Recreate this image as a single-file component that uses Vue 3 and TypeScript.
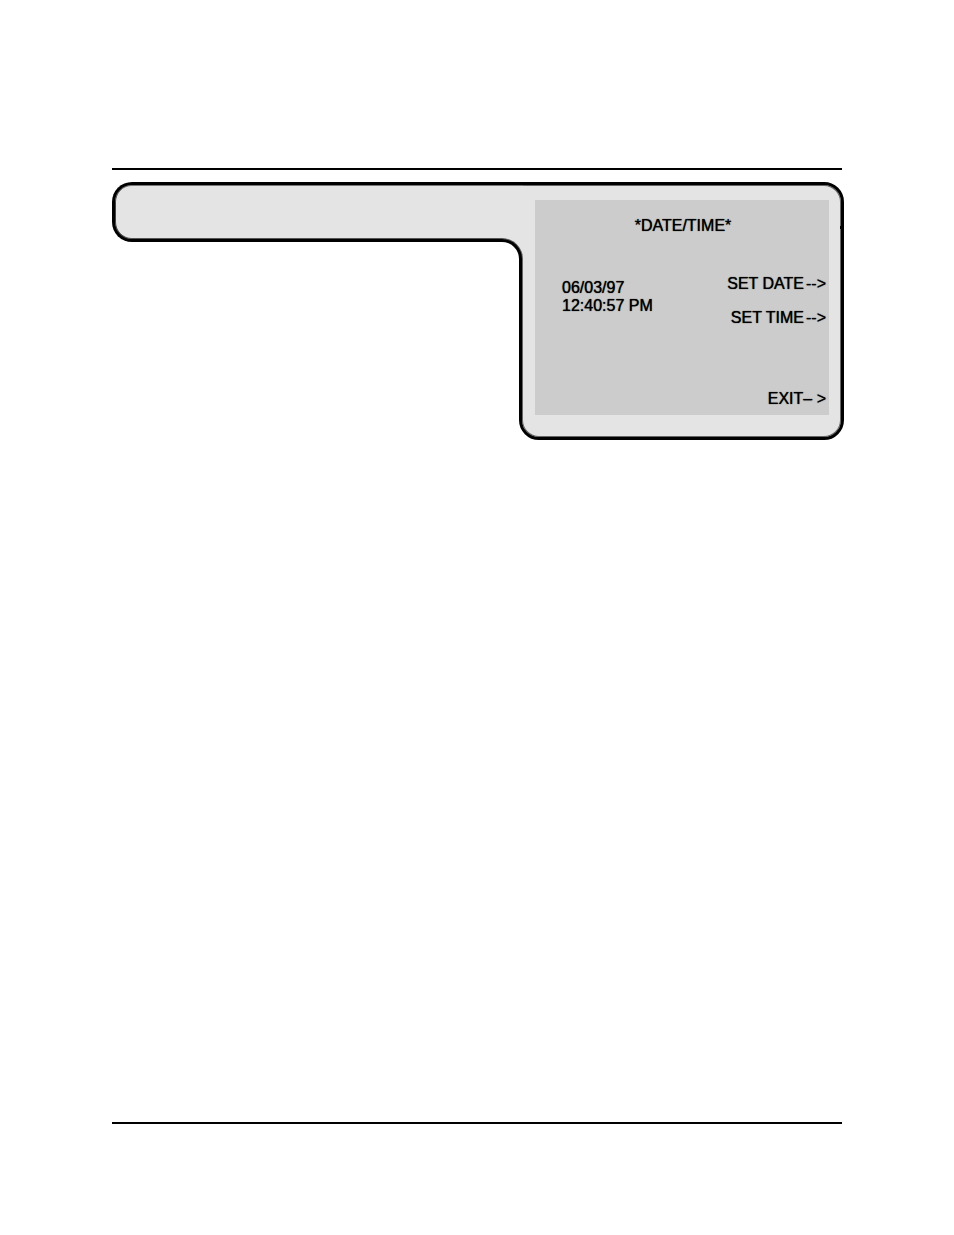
<script setup lang="ts">
import { ref } from 'vue'

interface MenuItem {
  id: string
  label: string
}

const title = '*DATE/TIME*'
const date = ref('06/03/97')
const time = ref('12:40:57 PM')
const settings: MenuItem[] = [
  { id: 'date', label: 'SET DATE' },
  { id: 'time', label: 'SET TIME' },
]
</script>

<template>
  <main class="page">
    <section class="device">
      <div class="arm"></div>
      <div class="body">
        <div class="elbow"><div class="elbow-cut"></div></div>
        <div class="screen">
          <h1 class="title">{{ title }}</h1>
          <div class="middle">
            <p class="clock">{{ date }}<br />{{ time }}</p>
            <div class="menu">
              <button v-for="item in settings" :key="item.id" type="button" class="key">
                <span>{{ item.label }}</span><span class="arrow">--&gt;</span>
              </button>
            </div>
          </div>
          <button type="button" class="key exit">EXIT– &gt;</button>
        </div>
      </div>
    </section>
  </main>
</template>

<style>
body {
  margin: 0;
  background: #fff;
}
</style>

<style scoped>
.page {
  box-sizing: border-box;
  min-height: calc(100vh - 279px);
  margin: 168px 112px 111px;
  padding-top: 12px;
  border-top: 2px solid #000;
  border-bottom: 2px solid #000;
  font-family: "Liberation Sans", Arial, sans-serif;
  font-size: 16px;
  line-height: 18px;
  color: #000;
}

.device {
  display: flex;
  align-items: flex-start;
  margin-right: -2px;
}

.arm {
  box-sizing: border-box;
  flex: 1;
  height: 60px;
  background: #e4e4e4;
  border: 3px solid #000;
  border-right: 0;
  border-radius: 20px 0 0 20px;
  box-shadow: inset 0 1px #777, inset 0 -1px #555, inset 1px 0 #444;
}

.body {
  position: relative;
  box-sizing: border-box;
  width: 325px;
  padding: 15px 12px 22px 13px;
  background: #e4e4e4;
  border: 3px solid #000;
  border-radius: 0 20px 20px 20px;
  box-shadow: inset 0 0 0 1px #666;
}

/* Small notch on the right edge of the case */
.body::after {
  content: "";
  position: absolute;
  top: 41px;
  right: 0;
  width: 1px;
  height: 3px;
  background: #000;
}

/* Inner corner where the arm runs into the body */
.elbow {
  position: absolute;
  top: -3px;
  left: -23px;
  box-sizing: border-box;
  display: flex;
  width: 24px;
  height: 80px;
  padding: 54px 1px 0 0;
  background: #e4e4e4;
  border-top: 3px solid #000;
  box-shadow: inset 0 1px #777;
}

.elbow-cut {
  box-sizing: border-box;
  flex: 1;
  background: #fff;
  border-top: 3px solid #000;
  border-right: 3px solid #000;
  border-radius: 0 20px 0 0;
  box-shadow: 1px 0 #666, 0 -1px #555;
}

.screen {
  display: flex;
  flex-direction: column;
  box-sizing: border-box;
  min-height: 215px;
  padding: 17px 3px 7px 27px;
  background: #ccc;
  text-shadow: 0 0 1px #000;
}

.title {
  margin: 0 22px 0 0;
  font: inherit;
  text-align: center;
}

.middle {
  display: flex;
  justify-content: space-between;
  align-items: flex-start;
  margin-top: 40px;
}

.clock {
  margin: 4px 0 0;
}

.menu {
  display: flex;
  flex-direction: column;
  align-items: flex-end;
  gap: 16px;
}

.key {
  padding: 0;
  border: 0;
  background: none;
  color: inherit;
  font: inherit;
  text-shadow: inherit;
  text-align: right;
  white-space: nowrap;
  cursor: pointer;
}

.arrow {
  margin-left: 2px;
}

.exit {
  align-self: flex-end;
  margin-top: auto;
}
</style>
